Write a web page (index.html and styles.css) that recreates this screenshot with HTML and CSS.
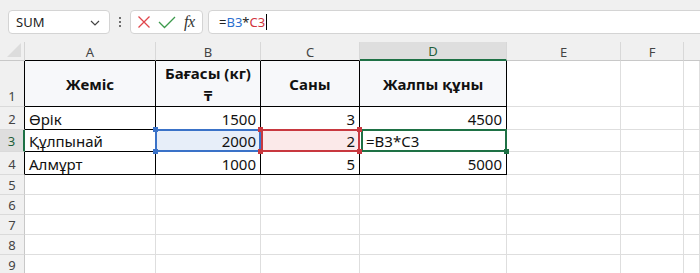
FILE: index.html
```html
<!DOCTYPE html>
<html lang="kk">
<head>
<meta charset="utf-8">
<title>Sheet</title>
<link rel="stylesheet" href="styles.css">
</head>
<body>
<div class="toolbar">
  <div class="namebox">
    <span class="name">SUM</span>
    <svg class="chev" width="10" height="6" viewBox="0 0 10 6"><path d="M1 1 L5 5 L9 1" fill="none" stroke="#444" stroke-width="1.2"/></svg>
  </div>
  <div class="dots"><i></i><i></i><i></i></div>
  <div class="fxbox">
    <svg width="14" height="14" viewBox="0 0 14 14"><path d="M1.5 1.5 L12.5 12.5 M12.5 1.5 L1.5 12.5" stroke="#e0454b" stroke-width="1.3" fill="none"/></svg>
    <svg width="18" height="14" viewBox="0 0 18 14"><path d="M1 7 L6.5 12.5 L17 2" stroke="#3c9a4c" stroke-width="1.3" fill="none"/></svg>
    <span class="fx">fx</span>
  </div>
  <div class="formula"><span class="blk">=</span><span class="ref-b">B3</span><span class="blk">*</span><span class="ref-c">C3</span><span class="caret"></span></div>
</div>
<div class="sheet">
  <div class="corner"><svg width="14" height="14" viewBox="0 0 14 14"><path d="M14 0 L14 14 L0 14 Z" fill="#dcdcdc"/></svg></div>
  <div class="ch ch-t">A</div>
  <div class="ch ch-t">B</div>
  <div class="ch ch-t">C</div>
  <div class="ch ch-sel">D</div>
  <div class="ch">E</div>
  <div class="ch">F</div>
  <div class="ch ch-last"></div>

  <div class="rh rh-t rh-bot">1</div>
  <div class="c t th">Жеміс</div>
  <div class="c t th">Бағасы (кг)<br>₸</div>
  <div class="c t th">Саны</div>
  <div class="c t th">Жалпы құны</div>
  <div class="c"></div>
  <div class="c"></div>
  <div class="c"></div>

  <div class="rh rh-t">2</div>
  <div class="c t">Өрік</div>
  <div class="c t num">1500</div>
  <div class="c t num">3</div>
  <div class="c t num">4500</div>
  <div class="c"></div>
  <div class="c"></div>
  <div class="c"></div>

  <div class="rh rh-t rh-sel">3</div>
  <div class="c t">Құлпынай</div>
  <div class="c t num sel-b">2000<span class="h h-tl"></span><span class="h h-bl"></span></div>
  <div class="c t num sel-c">2<span class="h h-tl"></span><span class="h h-tr"></span><span class="h h-bl"></span><span class="h h-br"></span></div>
  <div class="c t sel-d">=B3*C3<span class="h h-br"></span></div>
  <div class="c"></div>
  <div class="c"></div>
  <div class="c"></div>

  <div class="rh rh-t">4</div>
  <div class="c t">Алмұрт</div>
  <div class="c t num">1000</div>
  <div class="c t num">5</div>
  <div class="c t num">5000</div>
  <div class="c"></div>
  <div class="c"></div>
  <div class="c"></div>

  <div class="rh">5</div>
  <div class="c"></div><div class="c"></div><div class="c"></div><div class="c"></div><div class="c"></div><div class="c"></div><div class="c"></div>
  <div class="rh">6</div>
  <div class="c"></div><div class="c"></div><div class="c"></div><div class="c"></div><div class="c"></div><div class="c"></div><div class="c"></div>
  <div class="rh">7</div>
  <div class="c"></div><div class="c"></div><div class="c"></div><div class="c"></div><div class="c"></div><div class="c"></div><div class="c"></div>
  <div class="rh">8</div>
  <div class="c"></div><div class="c"></div><div class="c"></div><div class="c"></div><div class="c"></div><div class="c"></div><div class="c"></div>
  <div class="rh">9</div>
  <div class="c"></div><div class="c"></div><div class="c"></div><div class="c"></div><div class="c"></div><div class="c"></div><div class="c"></div>
</div>
</body>
</html>
```

FILE: styles.css
```css
* { box-sizing: border-box; }
html, body {
  margin: 0;
  padding: 0;
  background: #ffffff;
  overflow: hidden;
  font-family: "Noto Sans", "DejaVu Sans", sans-serif;
}
.toolbar {
  height: 42px;
  background: #f0f0f0;
  display: flex;
  align-items: flex-start;
  padding-top: 10px;
  padding-left: 8px;
}
.namebox {
  width: 102px;
  height: 24px;
  background: #fff;
  border: 1px solid #d4d4d4;
  border-radius: 4px;
  display: flex;
  align-items: center;
  justify-content: space-between;
  padding: 0 9px 0 7px;
  font-size: 13px;
  color: #222;
}
.chev { margin-top: 1px; }
.dots {
  width: 20px;
  height: 24px;
  display: flex;
  flex-direction: column;
  align-items: center;
  justify-content: center;
  gap: 2px;
}
.dots i {
  display: block;
  width: 2px;
  height: 2px;
  background: #444;
  border-radius: 1px;
}
.fxbox {
  width: 73px;
  height: 24px;
  background: #fff;
  border: 1px solid #d4d4d4;
  border-radius: 4px;
  display: flex;
  align-items: center;
  gap: 7px;
  padding-left: 6px;
}
.fx {
  font-family: "Liberation Serif", "DejaVu Serif", serif;
  font-style: italic;
  font-size: 16px;
  color: #333;
  margin-left: 1px;
  letter-spacing: -0.5px;
}
.formula {
  flex: 1;
  height: 24px;
  margin-left: 5px;
  margin-right: -10px;
  background: #fff;
  border: 1px solid #d4d4d4;
  border-radius: 4px;
  display: flex;
  align-items: center;
  padding-left: 10px;
  font-size: 13px;
}
.blk { color: #222; }
.ref-b { color: #2a6fcf; }
.ref-c { color: #d1343c; }
.caret {
  width: 1px;
  height: 16px;
  background: #000;
  margin-left: 1px;
}
.sheet {
  display: grid;
  grid-template-columns: 25px 131px 105px 99px 147px 114px 63px 1fr;
  grid-template-rows: 19px 46px 23px 22px 23px 20px 20px 20px 20px 20px;
  font-size: 15px;
  color: #111;
}
.corner {
  background: #f0f0f0;
  border-right: 1px solid #d4d4d4;
  border-bottom: 1px solid #c8c8c8;
  display: flex;
  align-items: flex-end;
  justify-content: flex-end;
  padding: 0 3px 3px 0;
}
.ch {
  background: #f0f0f0;
  border-right: 1px solid #d8d8d8;
  border-bottom: 1px solid #c8c8c8;
  font-size: 13px;
  color: #444;
  display: flex;
  align-items: center;
  justify-content: center;
  padding-top: 1px;
}
.ch-t { border-bottom-color: #000; }
.ch-sel {
  background: #dedede;
  border-bottom: 2px solid #1e7145;
  color: #1e5e3a;
}
.ch-last { border-right: none; }
.rh {
  background: #f0f0f0;
  border-right: 1px solid #c8c8c8;
  border-bottom: 1px solid #dadada;
  font-size: 13px;
  color: #444;
  display: flex;
  align-items: center;
  justify-content: center;
  padding-top: 1px;
}
.rh-bot { align-items: flex-end; padding-bottom: 1px; }
.rh-t { border-right-color: #000; }
.rh-sel {
  background: #dedede;
  border-right: 2px solid #1e7145;
  color: #1e5e3a;
}
.c {
  border-right: 1px solid #dedede;
  border-bottom: 1px solid #dedede;
  display: flex;
  align-items: flex-end;
  padding: 0 4px 0 4px;
  line-height: 20px;
  white-space: nowrap;
  position: relative;
}
.c.t {
  border-right-color: #000;
  border-bottom-color: #000;
}
.th {
  background: #f7f8fa;
  font-weight: 700;
  align-items: center;
  justify-content: center;
  text-align: center;
  line-height: 22px;
  white-space: normal;
}
.num { justify-content: flex-end; }
.sel-b { background: #e7eef9; }
.sel-c { background: #fbe9e9; }
.sel-b::after, .sel-c::after, .sel-d::after {
  content: "";
  position: absolute;
  left: -1px;
  top: -1px;
  right: -1px;
  bottom: -1px;
  border: 2px solid #3a72c8;
  pointer-events: none;
}
.sel-c::after { border-color: #c8383f; left: 0; }
.sel-d::after { border-color: #1e7145; left: 1px; }
.sel-d { padding-left: 6px; }
.h {
  position: absolute;
  width: 5px;
  height: 5px;
  z-index: 2;
}
.sel-b .h { background: #3a72c8; }
.sel-c .h { background: #c8383f; }
.sel-d .h { background: #1e7145; }
.h-tl { left: -3px; top: -3px; }
.h-tr { right: -3px; top: -3px; }
.h-bl { left: -3px; bottom: -3px; }
.h-br { right: -3px; bottom: -3px; }
```
